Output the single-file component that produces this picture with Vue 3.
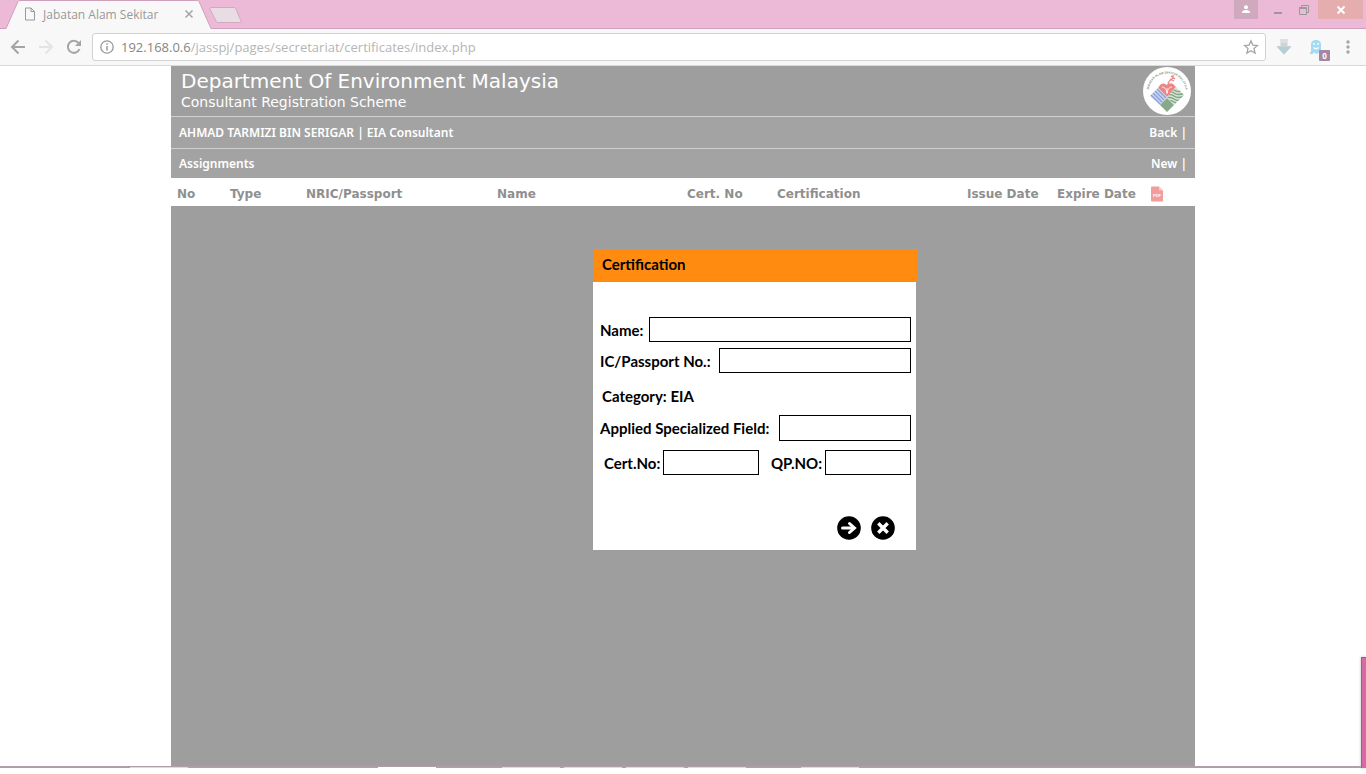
<script setup>
import { ref } from 'vue'

const address = ref('192.168.0.6/jasspj/pages/secretariat/certificates/index.php')
const form = ref({ name: '', passport: '', field: '', cert: '', qp: '' })

const columns = [
  { label: 'No', cls: 'c-no' },
  { label: 'Type', cls: 'c-type' },
  { label: 'NRIC/Passport', cls: 'c-wide' },
  { label: 'Name', cls: 'c-name' },
  { label: 'Cert. No', cls: 'c-date' },
  { label: 'Certification', cls: 'c-name' },
  { label: 'Issue Date', cls: 'c-date' },
  { label: 'Expire Date', cls: 'c-date' },
]
</script>

<template>
  <div class="screen">
    <header class="browser">
      <div class="tabstrip">
        <svg class="tab-shape" width="240" height="29" viewBox="0 0 240 29" aria-hidden="true">
          <path d="M0 29V28.500H6L18 1.500Q18.500.5 20 .5H197Q198.500.5 199 1.500L211 28.500V29Z" fill="#f8f8f8" />
          <path d="M0 28.500H6L18 1.500Q18.500.5 20 .5H197Q198.500.5 199 1.500L211 28.500H240" fill="none" stroke="#cfa0bc" />
        </svg>
        <svg class="new-tab" width="34" height="18" viewBox="0 0 34 18" aria-hidden="true">
          <path d="M2 .5H25Q26.500.5 27 2L32 14Q33 15.500 31 15.500H9Q7.500 15.500 7 14L1 2Q.5.5 2 .5Z" fill="#e8dde4" stroke="#d3a9c2" />
        </svg>
        <div class="tab">
          <svg width="12" height="14" viewBox="0 0 12 14" aria-hidden="true">
            <path d="M1.500 1H7L10.500 4.500V13H1.500ZM7 1V4.500H10.500" fill="none" stroke="#999" />
          </svg>
          <span class="tab-title">Jabatan Alam Sekitar</span>
          <button class="plain" aria-label="Close tab">
            <svg width="10" height="10" viewBox="0 0 10 10"><path d="M1.500 1.500L8.500 8.500M8.500 1.500L1.500 8.500" stroke="#a5a5a5" stroke-width="1.500" /></svg>
          </button>
        </div>
        <div class="window-controls">
          <button class="user" aria-label="User profile">
            <svg width="10" height="10" viewBox="0 0 10 10"><circle cx="5" cy="2.300" r="2" fill="#fff" /><path d="M1 8V7.500Q1 5 5 5T9 7.500V8Z" fill="#fff" /></svg>
          </button>
          <button class="win" aria-label="Minimize">
            <svg width="12" height="12" viewBox="0 0 12 12"><path d="M2 9H10" stroke="#999" stroke-width="2" /></svg>
          </button>
          <button class="win" aria-label="Restore">
            <svg width="12" height="12" viewBox="0 0 12 12"><path d="M1.500 3.500H8.500V10.500H1.500ZM1.500 4.500H8.500M3.500 3V1.500H10.500V8.500H9" fill="none" stroke="#999" /></svg>
          </button>
          <button class="close" aria-label="Close window">
            <svg width="10" height="10" viewBox="0 0 10 10"><path d="M1.500 1.500L8.500 8.500M8.500 1.500L1.500 8.500" stroke="#fff" stroke-width="2" /></svg>
          </button>
        </div>
      </div>

      <div class="toolbar">
        <button class="plain nav" aria-label="Back">
          <svg width="16" height="16" viewBox="0 0 16 16"><path d="M15 8H2M8.500 1.500L2 8L8.500 14.500" fill="none" stroke="#a5a5a5" stroke-width="2" /></svg>
        </button>
        <button class="plain nav" aria-label="Forward">
          <svg width="16" height="16" viewBox="0 0 16 16"><path d="M1 8H14M7.500 1.500L14 8L7.500 14.500" fill="none" stroke="#e4e4e4" stroke-width="2" /></svg>
        </button>
        <button class="plain nav" aria-label="Reload">
          <svg width="16" height="16" viewBox="0 0 16 16"><path d="M13.500 10A6 6 0 1 1 12.500 4" fill="none" stroke="#a5a5a5" stroke-width="2" /><path d="M15 1V7H9Z" fill="#a5a5a5" /></svg>
        </button>
        <div class="address">
          <svg width="14" height="14" viewBox="0 0 14 14" aria-hidden="true"><circle cx="7" cy="7" r="6.200" fill="none" stroke="#999" stroke-width="1.300" /><path d="M7 6V10.500M7 3.300V4.800" stroke="#999" stroke-width="1.500" /></svg>
          <label class="url">
            <span class="url-text"><b>192.168.0.6</b>/jasspj/pages/secretariat/certificates/index.php</span>
            <input v-model="address" class="url-input" aria-label="Address" />
          </label>
          <button class="plain" aria-label="Bookmark">
            <svg width="16" height="16" viewBox="0 0 16 16"><path d="M8 1.800L9.900 6.100L14.500 6.500L11 9.600L12.100 14.100L8 11.700L3.900 14.100L5 9.600L1.500 6.500L6.100 6.100Z" fill="none" stroke="#a5a5a5" stroke-width="1.300" /></svg>
          </button>
        </div>
        <button class="plain nav" aria-label="Downloads">
          <svg width="16" height="16" viewBox="0 0 16 16"><path d="M4.500 0H11.500V7H15.500L8 15.500L.5 7H4.500Z" fill="#cbd5d7" /><path d="M1 8H15L8 15.500Z" fill="#b5cfd4" /><path d="M4.500 0H11.500V4H4.500Z" fill="#dedede" /></svg>
        </button>
        <button class="plain nav ghost" aria-label="Trackers, 0 found">
          <svg width="14" height="16" viewBox="0 0 14 16"><path d="M2 12V5.500Q2 1 7 1T12 5.500V11Q12 13 14 13Q12 15 10 13.500L8 15L5 13.500L3 15.500L0 14Q2 14 2 12Z" fill="#a4daf3" /><path d="M5 4V6M9 4V6M4.500 8.500Q7 11 9.500 8.500" fill="none" stroke="#fff" stroke-width="1.400" /></svg>
          <span class="badge">0</span>
        </button>
        <button class="plain nav" aria-label="Menu">
          <svg width="4" height="14" viewBox="0 0 4 14"><circle v-for="y in [2, 7, 12]" :key="y" cx="2" :cy="y" r="1.700" fill="#a5a5a5" /></svg>
        </button>
      </div>
    </header>

    <main class="page">
      <div class="banner">
        <div>
          <h1>Department Of Environment Malaysia</h1>
          <p class="scheme">Consultant Registration Scheme</p>
        </div>
        <svg class="logo" width="48" height="48" viewBox="0 0 48 48" role="img" aria-label="Jabatan Alam Sekitar Malaysia">
          <defs>
            <path id="ring" d="M5.700 25A18.500 18.500 0 0 1 42.700 25" />
            <clipPath id="blue"><path d="M15 21L24 30L17 38L7 29Z" /></clipPath>
            <clipPath id="green"><path d="M33 20L41 28L31 38L24 30Z" /></clipPath>
          </defs>
          <circle cx="24" cy="24" r="24" fill="#fff" />
          <text font-size="3" font-weight="bold" font-family="Liberation Sans, sans-serif" fill="#829482"><textPath href="#ring" startOffset="2">JABATAN ALAM SEKITAR MALAYSIA</textPath></text>
          <path d="M15 21L24 30L33 20L30 17Q27 15 24 18Q20 15 17 18Z" fill="#ec8585" />
          <path d="M25 18Q25 14 30 11M28 9L32 12M27 12L31 14M30 8V11" stroke="#ec8585" stroke-width="1.300" fill="none" />
          <path d="M19 20Q23 20 24 26Q25 20 29 20M24 21V27" stroke="#fff" stroke-width=".8" fill="none" />
          <g clip-path="url(#blue)"><path d="M5 19H25V40H5Z" fill="#ccd5f0" /><path d="M3 27L17 41M5 25L19 39M7 23L21 37M9 21L23 35M11 19L25 33M13 17L27 31" stroke="#8c9fd6" stroke-width="1.300" /></g>
          <g clip-path="url(#green)"><path d="M23 19H42V40H23Z" fill="#d5e4d5" /><path d="M20 23Q27 20 31 23T42 23M20 26Q27 23 31 26T42 26M20 29Q27 26 31 29T42 29M20 32Q27 29 31 32T42 32M20 35Q27 32 31 35T42 35" stroke="#7fa883" stroke-width="1.500" fill="none" /></g>
          <path d="M24 31L31 38L24 45L17 38Z" fill="#87a98a" />
        </svg>
      </div>
      <div class="bar user-bar"><span>AHMAD TARMIZI BIN SERIGAR | EIA Consultant</span><span><a href="#">Back</a> |</span></div>
      <div class="bar"><span>Assignments</span><span><a href="#">New</a> |</span></div>

      <table>
        <thead>
          <tr>
            <th v-for="c in columns" :key="c.label" :class="c.cls" scope="col">{{ c.label }}</th>
            <th scope="col">
              <svg width="12" height="16" viewBox="0 0 12 16" role="img" aria-label="PDF"><path d="M1 .5H8L12 4.500V14.500Q12 15.500 11 15.500H1Q0 15.500 0 14.500V1.500Q0 .5 1 .5Z" fill="#f29c9c" /><path d="M8 .5V4.500H12Z" fill="#f9c9c9" /><text x="6" y="11" text-anchor="middle" font-size="4" font-weight="bold" font-family="Liberation Sans, sans-serif" fill="#fff">PDF</text></svg>
            </th>
          </tr>
        </thead>
      </table>

      <form class="dialog" role="dialog" aria-labelledby="dialog-title" @submit.prevent>
        <h2 id="dialog-title">Certification</h2>
        <div class="fields">
          <div class="row">
            <label for="name">Name:</label>
            <input id="name" v-model="form.name" class="w-name" />
          </div>
          <div class="row">
            <label for="passport">IC/Passport No.:</label>
            <input id="passport" v-model="form.passport" class="w-passport" />
          </div>
          <p class="category">Category: EIA</p>
          <div class="row">
            <label for="field">Applied Specialized Field:</label>
            <input id="field" v-model="form.field" class="w-field" />
          </div>
          <div class="row numbers">
            <div class="pair"><label for="cert">Cert.No:</label><input id="cert" v-model="form.cert" class="w-cert" /></div>
            <div class="pair"><label for="qp">QP.NO:</label><input id="qp" v-model="form.qp" class="w-qp" /></div>
          </div>
          <div class="actions">
            <button type="submit" class="plain" aria-label="Continue">
              <svg width="24" height="24" viewBox="0 0 24 24"><circle cx="12" cy="12" r="11.800" /><path d="M5.500 12H17M12.500 7.500L17.500 12L12.500 16.500" fill="none" stroke="#fff" stroke-width="3" stroke-linecap="round" /></svg>
            </button>
            <button type="button" class="plain" aria-label="Cancel">
              <svg width="24" height="24" viewBox="0 0 24 24"><circle cx="12" cy="12" r="11.800" /><path d="M8.500 8.500L15.500 15.500M15.500 8.500L8.500 15.500" stroke="#fff" stroke-width="3.400" stroke-linecap="square" /></svg>
            </button>
          </div>
        </div>
      </form>
    </main>

    <footer class="taskbar">
      <i class="gap-a"></i><i class="light short"></i><i class="gap-b"></i><i class="white short"></i><i class="gap-c"></i>
      <i v-for="n in 4" :key="n" class="light item"></i><i class="gap-d"></i><i class="light short"></i>
    </footer>
    <div class="side-panel"></div>
  </div>
</template>

<style>
body { margin: 0; background: #fff; }
</style>

<style scoped>
* { box-sizing: border-box; }
.screen {
  position: relative;
  display: flex;
  flex-direction: column;
  min-height: 100vh;
  padding-bottom: 6px;
  font-family: "Open Sans", "Noto Sans", sans-serif;
}
button { font: inherit; cursor: pointer; }
svg { display: block; flex: none; }
.plain { display: flex; align-items: center; justify-content: center; padding: 0; border: 0; background: none; }
.browser { background: #f8f8f8; border-bottom: 1px solid #d9d9d9; }
.tabstrip {
  position: relative;
  display: flex;
  justify-content: space-between;
  height: 29px;
  background: #ecbad6;
  border-bottom: 1px solid #cfa0bc;
}
.tab-shape { position: absolute; left: 0; top: 0; }
.new-tab { position: absolute; left: 209px; top: 7px; }
.tab { position: relative; display: flex; align-items: center; width: 195px; padding-left: 24px; color: #999; font-size: 12px; }
.tab-title { flex: 1; margin-left: 7px; white-space: nowrap; }
.tab .plain { margin-right: 1px; }
.window-controls { display: flex; align-items: flex-start; padding-right: 3px; }
.window-controls button { display: flex; align-items: center; justify-content: center; height: 19px; padding: 0; border: 0; background: none; }
.window-controls .user { width: 24px; margin-right: 7px; background: #cfaabf; }
.window-controls .win { width: 26px; }
.window-controls .close { width: 45px; margin-left: 1px; background: #e5adad; }
.toolbar { display: flex; align-items: center; height: 36px; padding: 0 4px; }
.nav { width: 28px; }
.address {
  flex: 1;
  display: flex;
  align-items: center;
  height: 28px;
  margin: 0 4px;
  padding: 0 6px 0 7px;
  border: 1px solid #d2d2d2;
  border-radius: 3px;
  background: #fff;
}
.url { position: relative; flex: 1; margin-left: 7px; color: #b5b5b5; font-size: 13px; line-height: 18px; }
.url b { color: #858585; font-weight: 400; }
.url-input { position: absolute; inset: 0; width: 100%; border: 0; padding: 0; background: transparent; color: transparent; font: inherit; outline: none; }
.ghost { position: relative; width: 36px; }
.badge {
  position: absolute;
  left: 21px;
  top: 11px;
  width: 11px;
  height: 11px;
  border-radius: 1px;
  background: #a388a3;
  color: #fff;
  font-size: 8px;
  font-weight: 700;
  line-height: 11px;
}

.page { position: relative; flex: 1; width: 100%; max-width: 1024px; margin: 0 auto; background: #9e9e9e; color: #fff; }
.banner { display: flex; justify-content: space-between; height: 50px; padding: 1px 4px 0 10px; font-family: "DejaVu Sans", sans-serif; }
h1 { margin: 0; font-size: 20px; font-weight: 400; line-height: 28px; }
.scheme { margin: 0; font-size: 14px; line-height: 14px; }
.bar {
  display: flex;
  align-items: center;
  justify-content: space-between;
  height: 30px;
  padding: 0 8px;
  border-top: 1px solid #cfcfcf;
  background: #a3a3a3;
  font: 600 12px/18px "Noto Sans", sans-serif;
}
.user-bar { height: 32px; }
.bar a { color: inherit; text-decoration: none; }
table {
  width: 100%;
  height: 28px;
  border-collapse: collapse;
  table-layout: fixed;
  background: #fff;
  color: #8f8f8f;
  font: 700 12px/18px "DejaVu Sans", sans-serif;
}
th { padding: 4px 0 0 6px; text-align: left; white-space: nowrap; }
.c-no { width: 53px; }
.c-type { width: 76px; }
.c-wide { width: 191px; }
.c-name { width: 190px; }
.c-date { width: 90px; }
th:last-child { padding-left: 10px; }

.dialog {
  position: absolute;
  left: 422px;
  top: 183px;
  width: 323px;
  color: #000;
  font: 700 15px/20px Lato, sans-serif;
}
h2 { height: 33px; margin: 0 -2px 0 1px; padding: 5px 8px; background: #ff8c10; font: inherit; }
.fields { padding: 35px 5px 10px 7px; background: #fff; }
.row { display: flex; align-items: center; justify-content: space-between; margin-bottom: 6px; }
.row input { height: 25px; padding: 0 4px; border: 1px solid #000; border-radius: 0; background: #fff; font: inherit; outline: none; }
.category { margin: 0; padding: 7px 2px 9px; }
.numbers { margin: 9px 0 0; padding-left: 4px; }
.pair { display: flex; align-items: center; gap: 3px; }
.w-name { width: 262px; }
.w-passport { width: 192px; }
.row .w-field { width: 132px; height: 26px; }
.w-cert { width: 96px; }
.w-qp { width: 86px; }
.actions { display: flex; justify-content: flex-end; gap: 10px; margin-top: 41px; padding-right: 16px; }

.taskbar { display: flex; align-items: flex-end; height: 2px; background: #b09eab; }
.taskbar i { height: 1px; }
.light { background: #e2d6df; }
.white { background: #fff; }
.short { width: 58px; }
.item { width: 58px; margin-right: 4px; }
.gap-a { width: 130px; }
.gap-b { width: 190px; }
.gap-c { width: 66px; }
.gap-d { width: 51px; }
.side-panel {
  position: absolute;
  right: 0;
  bottom: 6px;
  width: 5px;
  height: 111px;
  border: 1px solid #a45b84;
  border-width: 1px 0 0 1px;
  background: #d76aa5;
  box-shadow: 0 0 3px #bbb;
}
</style>
